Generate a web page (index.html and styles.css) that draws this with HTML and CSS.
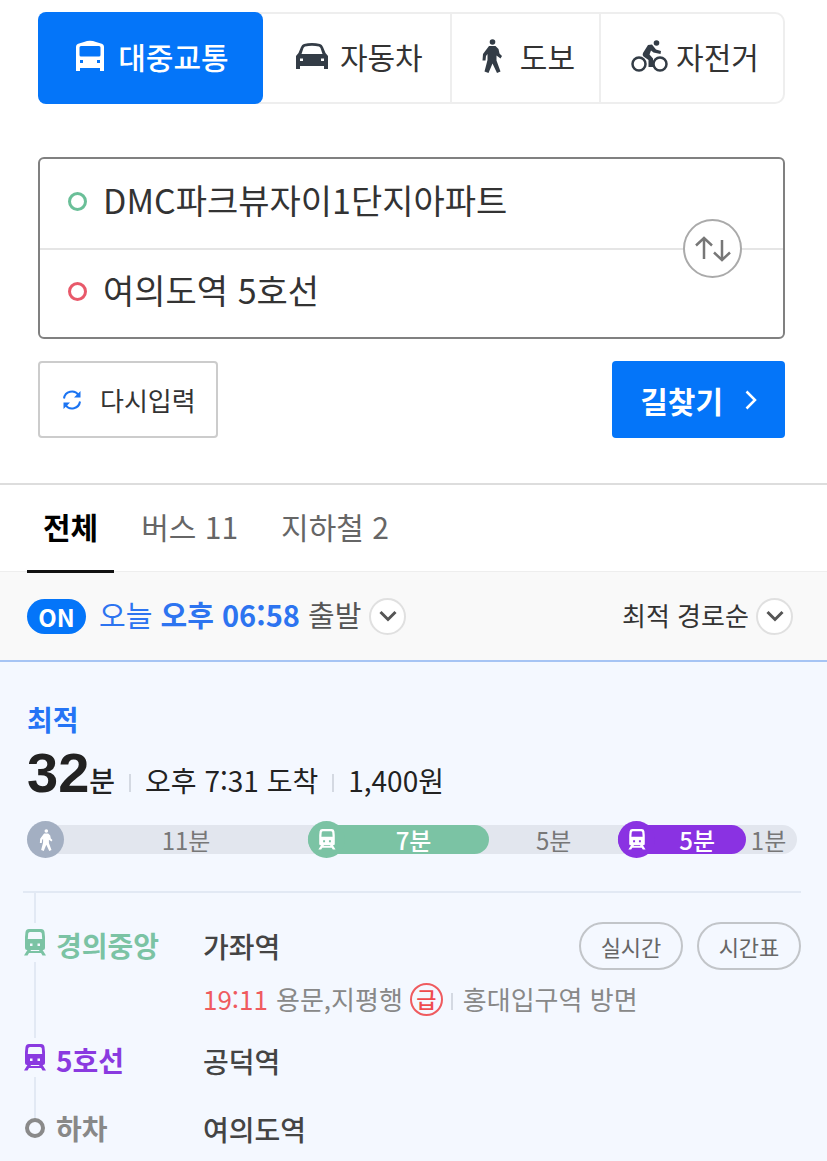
FILE: index.html
```html
<!DOCTYPE html>
<html lang="ko">
<head>
  <meta charset="UTF-8">
  <meta name="viewport" content="width=device-width, initial-scale=1">
  <title>길찾기</title>
  <link rel="stylesheet" href="styles.css">
</head>
<body>
<svg class="sprite" aria-hidden="true">
  <symbol id="walk" viewBox="0 0 20 34">
    <circle cx="10.5" cy="3" r="2.8"/>
    <path d="M7 7h6.500l3 3 1 4.500 2.500 2.500-1.500 2.500-4-3v5l4 11-3.500 1.500-4.500-9.500L6.500 34 2.500 32.500 5.500 21v-6L4 17l-.5 4.500H.5L1 15z"/>
  </symbol>
  <symbol id="train" viewBox="0 0 22 27">
    <path fill-rule="evenodd" d="M5 0h12q3 0 3.500 3L21 8v11q0 2-2 2H3q-2 0-2-2V8l.5-5Q2 0 5 0zM6 3q-1.500 0-1.800 1.500L3.800 10h14.400l-.4-5.500Q17.500 3 16 3zM6 14.500v2.500h2.500v-2.500zM13.500 14.500v2.500H16v-2.500z"/>
    <path d="M4 20h3.500l-1 2h9l-1-2H18l4 6.500h-3.500L17 24H5l-1.500 2.500H0z"/>
  </symbol>
  <symbol id="down" viewBox="0 0 18 12">
    <path d="M1.500 2 9 9.500 16.500 2" fill="none" stroke="currentColor" stroke-width="3"/>
  </symbol>
</svg>

<div class="search">
  <div class="modes">
    <button type="button" class="mode current">
      <svg width="28" height="31" viewBox="0 0 28 31"><path fill-rule="evenodd" d="M8 2q6-2.500 12 0l5 1.500q3 .5 3 3.500v24h-4v-3H4v3H0V7q0-3 3-3.500zM5 6q-1.500 0-1.500 1.500V15q0 1.500 1.500 1.500h18q1.500 0 1.500-1.500V7.500Q24.500 6 23 6zM4 20v3h3v-3zM21 20v3h3v-3z"/></svg>
      대중교통
    </button>
    <button type="button" class="mode">
      <svg width="32" height="26" viewBox="0 0 32 26"><path fill-rule="evenodd" d="M8 1q8-2 16 0 2 .5 3 3l2.500 6 2.500 3v13h-4v-3H4v3H0V13l2.500-3L5 4q1-2.500 3-3zM9 3.500Q8 4 7.500 5L5.500 11h21l-2-6q-.5-1-1.500-1.500-7-1.500-14 0zM4 15.500v2.500h3v-2.500zM25 15.500v2.500h3v-2.500z"/></svg>
      자동차
    </button>
    <button type="button" class="mode mode-walk">
      <svg width="20" height="34"><use href="#walk"/></svg>
      도보
    </button>
    <button type="button" class="mode mode-bike">
      <svg width="37" height="32" viewBox="0 0 37 32"><g class="stroke" stroke-width="2.500"><circle cx="8" cy="24" r="6.500"/><circle cx="29" cy="24" r="6.500"/></g><circle cx="25.500" cy="3" r="2.800"/><path d="M17 5l4-.5 4 5 5 1.500-.5 3-7-1.500-2.500-2-1.500 4 3.500 4V27h-4.500v-7l-5-3.500q-1.500-1.500-.5-3.500z"/></svg>
      자전거
    </button>
  </div>

  <form id="route" class="route">
    <label class="point start"><i></i><input type="text" aria-label="출발지" value="DMC파크뷰자이1단지아파트"></label>
    <label class="point goal"><i></i><input type="text" aria-label="도착지" value="여의도역 5호선"></label>
    <button type="button" class="swap" aria-label="출발지 도착지 바꾸기">
      <svg class="stroke" width="36" height="26" viewBox="0 0 36 26" stroke-width="2.500"><path d="M9 23V2M1 9.500 9 2l8 7.500"/><path d="M27 4v20M19 16.500l8 7.500 8-7.500"/></svg>
    </button>
  </form>

  <div class="actions">
    <button type="reset" form="route" class="reset">
      <svg width="20" height="20" viewBox="0 0 20 20"><path class="stroke" stroke-width="2" d="M2 8.500A8 8 0 0 1 16.500 5M18 11.500A8 8 0 0 1 3.500 15"/><path d="M18.500 1v6.500H12zM1.500 19v-6.500H8z"/></svg>
      다시입력
    </button>
    <button type="submit" form="route" class="find">
      길찾기
      <svg class="stroke" width="12" height="20" viewBox="0 0 12 20" stroke-width="2.500"><path d="M1.500 1.500 10 10l-8.500 8.500"/></svg>
    </button>
  </div>
</div>

<div class="tabs">
  <button type="button" class="tab current">전체</button>
  <button type="button" class="tab">버스 11</button>
  <button type="button" class="tab">지하철 2</button>
</div>

<div class="options">
  <button type="button" class="on">ON</button>
  <button type="button" class="time">
    <span class="text"><em>오늘 <b>오후 06:58</b></em> 출발</span>
    <span class="arrow"><svg width="18" height="12"><use href="#down"/></svg></span>
  </button>
  <label class="sort">
    <select class="text" aria-label="정렬">
      <option>최적 경로순</option>
    </select>
    <span class="arrow"><svg width="18" height="12"><use href="#down"/></svg></span>
  </label>
</div>

<div class="result">
  <strong class="best">최적</strong>
  <div class="summary">
    <span class="total"><b>32</b>분</span>
    <span class="info">오후 7:31 도착</span>
    <span class="info">1,400원</span>
  </div>

  <!-- 구간별 소요시간 -->
  <div class="bar">
    <div class="part first" style="width: 36.5%"><span class="dot"><svg width="14" height="22"><use href="#walk"/></svg></span>11분</div>
    <div class="part ride green" style="width: 23.5%"><span class="dot"><svg width="18" height="21"><use href="#train"/></svg></span>7분</div>
    <div class="part" style="width: 16.8%">5분</div>
    <div class="part ride purple" style="width: 16.6%"><span class="dot"><svg width="18" height="21"><use href="#train"/></svg></span>5분</div>
    <div class="part last" style="width: 6.6%">1분</div>
  </div>

  <ol class="steps">
    <li class="step c-green">
      <div class="mark"><svg width="22" height="27"><use href="#train"/></svg></div>
      <strong class="line">경의중앙</strong>
      <div class="stop">
        <div class="head">
          <span class="station">가좌역</span>
          <button type="button" class="pill">실시간</button>
          <button type="button" class="pill">시간표</button>
        </div>
        <div class="next"><span class="clock">19:11</span> 용문,지평행 <span class="express">급</span><span class="way">홍대입구역 방면</span></div>
      </div>
    </li>
    <li class="step c-purple">
      <div class="mark"><svg width="22" height="27"><use href="#train"/></svg></div>
      <strong class="line">5호선</strong>
      <div class="stop"><div class="head"><span class="station">공덕역</span></div></div>
    </li>
    <li class="step end">
      <div class="mark"><i></i></div>
      <strong class="line">하차</strong>
      <div class="stop"><div class="head"><span class="station">여의도역</span></div></div>
    </li>
  </ol>
</div>
</body>
</html>
```

FILE: styles.css
```css
* {
  box-sizing: border-box;
  padding: 0;
  margin: 0;
}

body {
  background: #fff;
  color: #333;
  font-family: "Noto Sans CJK KR", sans-serif;
  font-size: 30px;
}

button, input, select {
  font: inherit;
  color: inherit;
  border: 0;
  background: none;
  outline: none;
}

button, select {
  cursor: pointer;
}

svg {
  display: block;
  flex-shrink: 0;
  fill: currentColor;
}

.stroke {
  fill: none;
  stroke: currentColor;
}

ol {
  list-style: none;
}

em {
  font-style: normal;
}

.sprite {
  position: absolute;
  width: 0;
  height: 0;
}

/* 검색 */
.search {
  padding: 12px 42px 45px 38px;
  border-bottom: 2px solid #ddd;
}

.modes {
  display: grid;
  grid-template-columns: 224fr 188fr 150fr 185fr;
  height: 92px;
  border: 2px solid #eee;
  border-radius: 10px;
}

.mode {
  display: flex;
  align-items: center;
  justify-content: center;
  gap: 12px;
  padding: 0 0 5px 6px;
  border-left: 2px solid #eee;
}

.mode svg {
  color: #333c46;
}

.mode.current {
  margin: -2px 0 -2px -2px;
  gap: 14px;
  padding-left: 4px;
  border: 0;
  border-radius: 8px;
  background: #0475f9;
  color: #fff;
  font-weight: 500;
}

.mode.current svg {
  color: #fff;
}

.mode.current + .mode {
  border: 0;
}

.mode-walk {
  gap: 18px;
}

.mode-bike {
  gap: 8px;
}

.route {
  position: relative;
  margin-top: 53px;
  border: 2px solid #808080;
  border-radius: 6px;
}

.point {
  display: flex;
  align-items: center;
  gap: 16px;
  height: 89px;
  padding: 0 110px 5px 28px;
  font-size: 34px;
}

.point i {
  width: 19px;
  height: 19px;
  border: 3px solid #6abf98;
  border-radius: 50%;
}

.goal i {
  border-color: #e8596a;
}

.goal {
  border-top: 2px solid #e5e5e5;
}

.point input {
  flex: 1;
  min-width: 0;
  padding-bottom: 3px;
}

.swap {
  position: absolute;
  right: 41px;
  top: 50%;
  display: flex;
  align-items: center;
  justify-content: center;
  width: 59px;
  height: 59px;
  margin-top: -29px;
  border: 2px solid #aaa;
  border-radius: 50%;
  background: #fff;
  color: #777;
}

.actions {
  display: flex;
  justify-content: space-between;
  margin-top: 22px;
}

.reset, .find {
  display: flex;
  align-items: center;
  height: 77px;
  border-radius: 4px;
}

.reset {
  gap: 18px;
  padding: 0 20px 0 22px;
  border: 2px solid #ccc;
  font-size: 26px;
}

.reset svg {
  color: #1b74f2;
}

.find {
  gap: 22px;
  padding: 0 28px;
  background: #0475f9;
  color: #fff;
  font-weight: bold;
}

/* 탭 */
.tabs {
  display: flex;
  gap: 11px;
  height: 87px;
  padding: 0 27px;
  border-bottom: 1px solid #eee;
}

.tab {
  height: 88px;
  padding: 0 16px 4px;
  border-bottom: 3px solid transparent;
  color: #666;
}

.tab.current {
  border-color: #111;
  color: #000;
  font-weight: bold;
}

.options {
  display: flex;
  align-items: center;
  height: 90px;
  padding: 0 34px 0 27px;
  background: #f9f9f9;
  border-bottom: 2px solid #a6c4f4;
}

.on {
  width: 59px;
  height: 35px;
  border-radius: 18px;
  background: #0475f9;
  color: #fff;
  font-size: 24px;
  font-weight: bold;
  line-height: 33px;
}

.time, .sort {
  display: flex;
  align-items: center;
  gap: 8px;
}

.time {
  margin-left: 13px;
  color: #555;
  font-size: 29px;
}

.time em {
  color: #2d74f0;
}

.sort {
  margin-left: auto;
  font-size: 26px;
}

.sort select {
  appearance: none;
}

.options .text {
  padding-bottom: 4px;
}

.arrow {
  display: flex;
  align-items: center;
  justify-content: center;
  width: 37px;
  height: 37px;
  border: 2px solid #e0e0e0;
  border-radius: 50%;
  background: #fff;
  color: #555;
}

/* 경로 결과 */
.result {
  min-height: calc(100vh - 662px);
  padding: 37px 26px 0 23px;
  background: #f4f8ff;
}

.best {
  display: block;
  padding-left: 4px;
  color: #2474f5;
  font-size: 28px;
  font-weight: bold;
  line-height: 40px;
}

.summary {
  display: flex;
  align-items: baseline;
  height: 82px;
  padding-left: 4px;
  color: #222;
  font-size: 28px;
  line-height: 67px;
}

.total {
  font-weight: 500;
}

.total b {
  font-family: "Liberation Sans", sans-serif;
  font-size: 56px;
}

.info::before {
  content: "";
  display: inline-block;
  width: 2px;
  height: 18px;
  margin: 0 14px;
  background: #d4d9e2;
}

.bar {
  display: flex;
  height: 29px;
  margin: 4px 4px 0;
  border-radius: 15px;
  background: #e2e6ee;
}

.part {
  position: relative;
  display: flex;
  align-items: center;
  justify-content: center;
  color: #777;
  font-size: 24px;
  line-height: 29px;
}

.first {
  padding-left: 37px;
}

.last {
  padding-right: 6px;
}

.ride {
  padding-left: 30px;
  border-radius: 15px;
  color: #fff;
  font-weight: 500;
}

.green, .green .dot {
  background: #7bc3a4;
}

.purple, .purple .dot {
  background: #8a32e2;
}

.dot {
  position: absolute;
  left: 0;
  top: -4px;
  display: flex;
  align-items: center;
  justify-content: center;
  width: 37px;
  height: 37px;
  border-radius: 50%;
  background: #a3afc2;
  color: #fff;
}

.steps {
  margin-top: 37px;
  border-top: 2px solid #e2e9f4;
}

.steps::before {
  content: "";
  display: block;
  width: 2px;
  height: 30px;
  margin-left: 11px;
  background: #e2e9f4;
}

.step {
  display: flex;
  gap: 9px;
  min-height: 68px;
  font-size: 28px;
  line-height: 45px;
}

.mark {
  display: flex;
  flex-direction: column;
  align-items: center;
  width: 24px;
}

.mark svg {
  margin: 6px 0;
}

.mark::after {
  content: "";
  flex: 1;
  width: 2px;
  background: #e2e9f4;
}

.end .mark::before {
  content: "";
  width: 2px;
  height: 12px;
  background: #e2e9f4;
}

.end .mark::after {
  display: none;
}

.mark i {
  width: 20px;
  height: 20px;
  border: 4px solid #8a8a8a;
  border-radius: 50%;
}

.line {
  width: 138px;
  color: #888;
}

.c-green .mark svg, .c-green .line {
  color: #7bc3a4;
}

.c-purple .mark svg, .c-purple .line {
  color: #8a3ae0;
}

.stop {
  flex: 1;
}

.head {
  display: flex;
  align-items: center;
  gap: 14px;
  height: 46px;
}

.station {
  margin-right: auto;
  color: #444;
  font-weight: 500;
}

.pill {
  width: 104px;
  height: 48px;
  padding-bottom: 3px;
  border: 2px solid #c2c5c9;
  border-radius: 24px;
  color: #666;
  font-size: 22px;
}

.next {
  display: flex;
  align-items: center;
  gap: 8px;
  padding: 10px 0 19px;
  color: #888;
  font-size: 26px;
  line-height: 40px;
}

.clock {
  color: #ef5b5f;
}

.express {
  width: 33px;
  height: 33px;
  margin-left: -1px;
  border: 2px solid #ef5b5f;
  border-radius: 50%;
  color: #ef4b4f;
  font-size: 22px;
  font-weight: 500;
  line-height: 27px;
  text-align: center;
}

.way::before {
  content: "";
  display: inline-block;
  width: 2px;
  height: 17px;
  margin-right: 10px;
  background: #d4d9e2;
}
```
